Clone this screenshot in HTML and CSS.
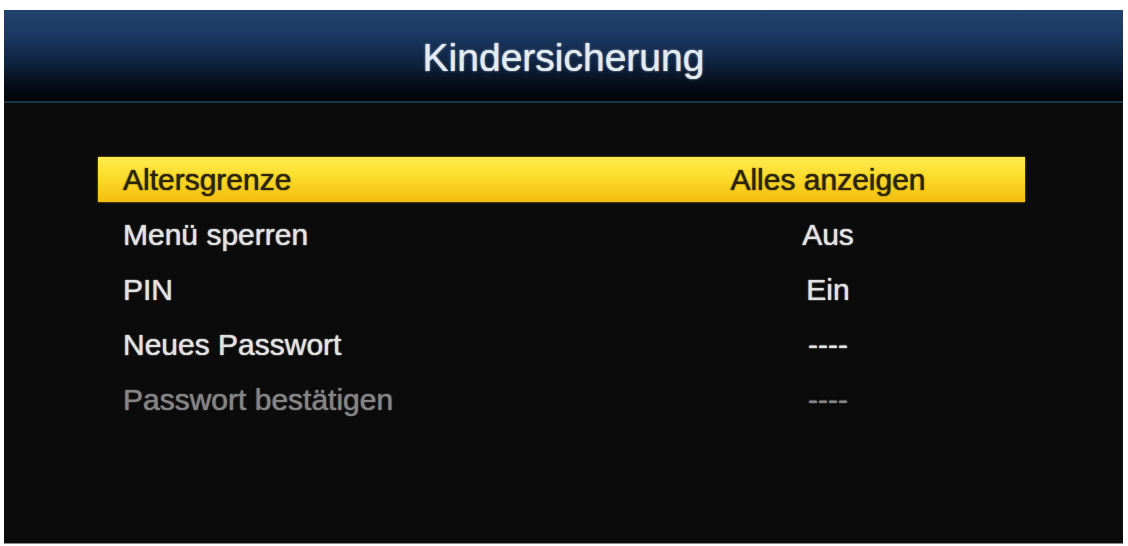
FILE: index.html
```html
<!DOCTYPE html>
<html lang="de">
<head>
<meta charset="utf-8">
<title>Kindersicherung</title>
<link rel="stylesheet" href="styles.css">
</head>
<body>
<div class="screen">
  <header class="header">
    <h1 class="title">Kindersicherung</h1>
  </header>
  <main class="menu">
    <div class="row row-active">
      <span class="label">Altersgrenze</span>
      <span class="value">Alles anzeigen</span>
    </div>
    <div class="row">
      <span class="label">Menü sperren</span>
      <span class="value">Aus</span>
    </div>
    <div class="row">
      <span class="label">PIN</span>
      <span class="value">Ein</span>
    </div>
    <div class="row">
      <span class="label">Neues Passwort</span>
      <span class="value">----</span>
    </div>
    <div class="row row-disabled">
      <span class="label">Passwort bestätigen</span>
      <span class="value">----</span>
    </div>
  </main>
</div>
</body>
</html>
```
FILE: styles.css
```css
html, body {
  margin: 0;
  padding: 0;
  background: #ffffff;
}

body {
  width: 1128px;
  height: 546px;
  overflow: hidden;
  font-family: "Liberation Sans", Arial, sans-serif;
}

.screen {
  margin: 10px 5px 0 4px;
  height: 534px;
  background: #0b0b0b;
  border-bottom: 1px solid #8a8a8a;
  box-sizing: border-box;
  display: flex;
  flex-direction: column;
}

.header {
  height: 91px;
  background: linear-gradient(to bottom, #21426f 0%, #1c3a64 25%, #102544 55%, #050b16 85%, #030507 100%);
  border-bottom: 2px solid #1b3548;
  display: flex;
  justify-content: center;
  flex-shrink: 0;
}

.title {
  margin: 0;
  font-weight: normal;
  font-size: 39px;
  line-height: 1;
  padding-top: 28px;
  color: #e2ebf0;
  text-shadow: 0 0 1px #e2ebf0, 0 0 3px rgba(200, 220, 240, 0.45);
}

.menu {
  padding: 54px 98px 0 94px;
  display: flex;
  flex-direction: column;
  gap: 10px;
}

.row {
  height: 45px;
  display: grid;
  grid-template-columns: 1fr 300px;
  padding: 0 47px 0 25px;
  font-size: 30px;
  line-height: 45px;
  color: #e2e2e2;
  text-shadow: 0 0 1px #e2e2e2, 0 0 2px rgba(255, 255, 255, 0.35);
  white-space: nowrap;
}

.value {
  text-align: center;
}

.row-active {
  background: linear-gradient(to bottom, #fdeb4f 0%, #fbdc2a 45%, #f4bd10 100%);
  color: #2b2406;
  text-shadow: 0 0 1px #2b2406, 0 0 2px rgba(60, 45, 0, 0.4);
  box-shadow: 0 0 2px #a08000;
}

.row-disabled {
  color: #858585;
  text-shadow: 0 0 1px #858585, 0 0 2px rgba(130, 130, 130, 0.35);
}
```
